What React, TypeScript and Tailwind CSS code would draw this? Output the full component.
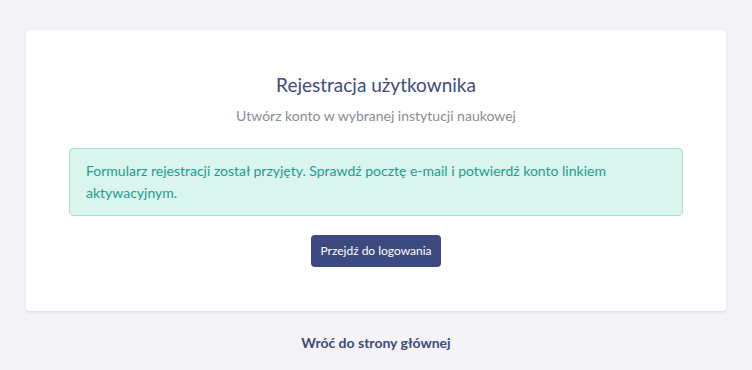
import React from 'react';

const App = () => {
  return (
    <div
      className="min-h-[370px] w-full bg-[#f4f3f8] px-[26px] pt-[30px]"
      style={{ fontFamily: 'Lato, "Open Sans", sans-serif' }}
    >
      <div className="bg-white rounded-[4px] shadow-[0_1px_3px_rgba(60,60,100,0.12)] h-[281px] pt-[42px] px-[43px]">
        <h1 className="text-center text-[19px] leading-[26px] text-[#404c7c]">Rejestracja użytkownika</h1>
        <p className="mt-[8px] text-center text-[14px] leading-[20px] text-[#8a8b99]">
          Utwórz konto w wybranej instytucji naukowej
        </p>
        <div className="mt-[22px] rounded-[4px] border border-[#a3e5d5] bg-[#d9f5ee] px-[16px] pt-[11px] pb-[11px] text-[14px] leading-[22px] text-[#1a9e8d]">
          Formularz rejestracji został przyjęty. Sprawdź pocztę e-mail i potwierdź konto linkiem aktywacyjnym.
        </div>
        <div className="mt-[19px] flex justify-center">
          <button className="h-[32px] w-[130px] rounded-[4px] bg-[#3d4a80] text-[12px] text-white">
            Przejdź do logowania
          </button>
        </div>
      </div>
      <div className="mt-[19px] text-center">
        <a className="text-[14px] font-bold text-[#3d4a7a]">Wróć do strony głównej</a>
      </div>
    </div>
  );
};

export default App;
